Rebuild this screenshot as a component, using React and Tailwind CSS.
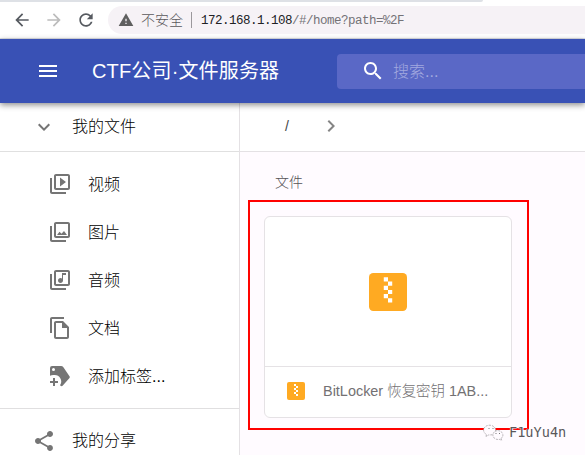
import React from "react";

const P = {
  back: "M20 11H7.83l5.59-5.59L12 4l-8 8 8 8 1.41-1.41L7.83 13H20v-2z",
  forward: "M12 4l-1.41 1.41L16.17 11H4v2h12.17l-5.58 5.59L12 20l8-8z",
  refresh:
    "M17.65 6.35C16.2 4.9 14.21 4 12 4c-4.42 0-7.99 3.58-7.99 8s3.57 8 7.99 8c3.73 0 6.84-2.55 7.73-6h-2.08c-.82 2.33-3.04 4-5.65 4-3.31 0-6-2.69-6-6s2.69-6 6-6c1.66 0 3.14.69 4.22 1.78L13 11h7V4l-2.35 2.35z",
  warning: "M1 21h22L12 2 1 21zm12-3h-2v-2h2v2zm0-4h-2v-4h2v4z",
  menu: "M3 18h18v-2H3v2zm0-5h18v-2H3v2zm0-7v2h18V6H3z",
  search:
    "M15.5 14h-.79l-.28-.27C15.41 12.59 16 11.11 16 9.5 16 5.91 13.09 3 9.5 3S3 5.91 3 9.5 5.91 16 9.5 16c1.61 0 3.09-.59 4.23-1.57l.27.28v.79l5 4.99L20.49 19l-4.99-5zm-6 0C7.01 14 5 11.99 5 9.5S7.01 5 9.5 5 14 7.01 14 9.5 11.99 14 9.5 14z",
  down: "M16.59 8.59L12 13.17 7.41 8.59 6 10l6 6 6-6z",
  right: "M10 6L8.59 7.41 13.17 12l-4.58 4.59L10 18l6-6z",
  video:
    "M4 6H2v14c0 1.1.9 2 2 2h14v-2H4V6zm16-4H8c-1.1 0-2 .9-2 2v12c0 1.1.9 2 2 2h12c1.1 0 2-.9 2-2V4c0-1.1-.9-2-2-2zm0 14H8V4h12v12zM12 5.5v9l6-4.5z",
  image:
    "M4 6H2v14c0 1.1.9 2 2 2h14v-2H4V6zm16-4H8c-1.1 0-2 .9-2 2v12c0 1.1.9 2 2 2h12c1.1 0 2-.9 2-2V4c0-1.1-.9-2-2-2zm0 14H8V4h12v12zM9 15l2.5-3.2 2 2L16 11l3 4z",
  music:
    "M20 2H8c-1.1 0-2 .9-2 2v12c0 1.1.9 2 2 2h12c1.1 0 2-.9 2-2V4c0-1.1-.9-2-2-2zm0 14H8V4h12v12zm-7.5-1c1.38 0 2.5-1.12 2.5-2.5V7h3V5h-4v5.51c-.42-.32-.93-.51-1.5-.51-1.38 0-2.5 1.12-2.5 2.5s1.12 2.5 2.5 2.5zM4 6H2v14c0 1.1.9 2 2 2h14v-2H4V6z",
  doc: "M16 1H4c-1.1 0-2 .9-2 2v14h2V3h12V1zm-1 4H8c-1.1 0-1.99.9-1.99 2L6 21c0 1.1.89 2 1.99 2H19c1.1 0 2-.9 2-2V11l-6-6zM8 21V7h6v5h5v9H8z",
  tag: "M21.5 12.2l-6.1-8.9A3 3 0 0 0 13 2H4a2 2 0 0 0-2 2v7.8A6.6 6.6 0 0 1 6 11a6.5 6.5 0 0 1 6 10.2l.6.5a1.6 1.6 0 0 0 2.2-.2l6.7-7.6a1.3 1.3 0 0 0 0-1.7zM5.5 7A1.5 1.5 0 1 1 7 5.5 1.5 1.5 0 0 1 5.5 7zM10 19H7v3H5v-3H2v-2h3v-3h2v3h3z",
  share:
    "M18 16.08c-.76 0-1.44.3-1.96.77L8.91 12.7c.05-.23.09-.46.09-.7s-.04-.47-.09-.7l7.05-4.11c.54.5 1.25.81 2.04.81 1.66 0 3-1.34 3-3s-1.34-3-3-3-3 1.34-3 3c0 .24.04.47.09.7L8.04 9.81C7.5 9.31 6.79 9 6 9c-1.66 0-3 1.34-3 3s1.34 3 3 3c.79 0 1.5-.31 2.04-.81l7.12 4.16c-.05.21-.08.43-.08.65 0 1.61 1.31 2.92 2.92 2.92s2.92-1.31 2.92-2.92-1.31-2.92-2.92-2.92z",
};

function Icon({ name, className = "size-6" }) {
  return (
    <svg viewBox="0 0 24 24" fill="currentColor" className={`shrink-0 ${className}`}>
      <path d={P[name]} />
    </svg>
  );
}

function ZipIcon({ className }) {
  return (
    <svg viewBox="0 0 18 18" className={`shrink-0 ${className}`}>
      <rect width="18" height="18" rx="2" fill="#ffaa22" />
      <path
        fill="#fff"
        d="M7 2h2v2H7zM9 4h2v2H9zM7 6h2v2H7zM9 8h2v2H9zM7 10h2v2H7zM9 12h2v2H9z"
      />
    </svg>
  );
}

const items = [
  { icon: "video", label: "视频" },
  { icon: "image", label: "图片" },
  { icon: "music", label: "音频" },
  { icon: "doc", label: "文档" },
  { icon: "tag", label: "添加标签..." },
];

function Browser() {
  return (
    <div className="h-[39px] shrink-0 border-b border-[#dee1e6] bg-white">
      <div className="h-[2px] w-[483px] rounded-br-sm bg-[#dee1e6]" />
      <div className="flex h-9 items-center pl-3 text-[#565a60]">
        <Icon name="back" className="size-5" />
        <Icon name="forward" className="ml-3 size-5 text-[#bcbcbc]" />
        <Icon name="refresh" className="ml-3 size-5" />
        <div className="ml-3 flex h-7 flex-1 items-center rounded-l-full bg-[#f6f2f6] pl-[10px]">
          <Icon name="warning" className="size-4 text-[#5f5f5f]" />
          <span className="ml-[7px] text-sm font-light text-[#5a585c]">不安全</span>
          <span className="ml-2 h-4 w-px bg-[#9b989c]" />
          <span className="ml-[9px] whitespace-nowrap pt-[3px] font-['Liberation_Mono',monospace] text-[12.5px] tracking-[-0.5px] text-[#202124]">
            172.168.1.108<span className="text-[#747276]">/#/home?path=%2F</span>
          </span>
        </div>
      </div>
    </div>
  );
}

function Sidebar() {
  return (
    <aside className="w-60 shrink-0 border-r border-[#e4e1e4] bg-white text-base font-light text-black">
      <div className="flex h-[49px] items-center border-b border-[#e0e0e0] pl-8">
        <Icon name="down" className="size-6 text-[#757575]" />
        <span className="ml-4">我的文件</span>
      </div>
      <div className="border-b border-[#e0dfe0] py-2">
        {items.map((item) => (
          <div key={item.label} className="flex h-12 items-center pl-12">
            <Icon name={item.icon} className="size-6 text-[#757575]" />
            <span className="ml-4 pt-px">{item.label}</span>
          </div>
        ))}
      </div>
      <div className="flex h-16 items-center pl-8">
        <Icon name="share" className="size-6 text-[#757575]" />
        <span className="ml-4">我的分享</span>
      </div>
    </aside>
  );
}

function FileCard() {
  return (
    <div className="mt-2 ml-2 h-[230px] w-[281px] border-2 border-[#ff0000] p-[14px]">
      <div className="flex h-[202px] w-[248px] flex-col rounded-md border border-[#e5e2e5] bg-white">
        <div className="flex h-[150px] items-center justify-center border-b border-[#e5e2e5]">
          <ZipIcon className="size-[38px]" />
        </div>
        <div className="flex flex-1 items-center pb-[2px] pl-[22px]">
          <ZipIcon className="size-[18px]" />
          <span className="ml-[18px] whitespace-nowrap pt-[2px] text-[14.45px] font-light text-[#737173]">
            BitLocker 恢复密钥 1AB...
          </span>
        </div>
      </div>
    </div>
  );
}

function Watermark() {
  return (
    <div className="absolute top-[422px] left-[483px] flex items-center">
      <svg viewBox="0 0 22 20" className="h-5 w-[22px]" fill="#fffbff" stroke="#a5a1a5" strokeWidth="0.8" strokeDasharray="2 1">
        <path d="M3 14.5l.5-2A6 5 0 1 1 9 12.8L5.5 13z" />
        <path d="M18 16.5l.7 1.8-2.5-1a5 4.4 0 1 1 1.8-.8z" />
        <path d="M5.5 6.5h1M9.5 6.5h1M12.5 11.5h1M16 11.5h1" strokeDasharray="none" stroke="#555" />
      </svg>
      <span className="ml-1 font-['DejaVu_Sans_Mono',monospace] text-[13.6px] leading-5 text-[#5a575b] [text-shadow:0_0_1px_#fff,0_0_1px_#fff,1px_0_1px_#fff]">
        F1uYu4n
      </span>
    </div>
  );
}

export default function App() {
  return (
    <div className="relative flex h-[455px] w-[585px] flex-col overflow-hidden bg-[#fffbff] font-['Liberation_Sans','Noto_Sans_CJK_SC',sans-serif]">
      <Browser />
      <header className="z-10 flex h-16 shrink-0 items-center bg-[#3951b5] pl-9 text-white shadow-[0_2px_6px_rgba(0,0,0,0.45)]">
        <Icon name="menu" />
        <h1 className="ml-8 w-[245px] whitespace-nowrap text-[20px] leading-6 tracking-[0.15px]">
          CTF公司·文件服务器
        </h1>
        <div className="flex h-[35px] flex-1 items-center rounded-l bg-[#5a68c6] pl-6">
          <Icon name="search" />
          <span className="ml-2 pt-px text-base font-light text-[#a2a9df]">搜索...</span>
        </div>
      </header>
      <div className="flex min-h-0 flex-1">
        <Sidebar />
        <main className="flex-1">
          <div className="flex h-[49px] items-center border-b border-[#e4e1e4] bg-white pb-[2px] pl-[45px] text-sm text-[#444]">
            <span>/</span>
            <Icon name="right" className="ml-[30px] size-6 text-[#858585]" />
          </div>
          <div className="mt-5 ml-[35px] h-5 text-sm leading-5 font-light text-[#555256]">文件</div>
          <FileCard />
        </main>
      </div>
      <Watermark />
    </div>
  );
}
